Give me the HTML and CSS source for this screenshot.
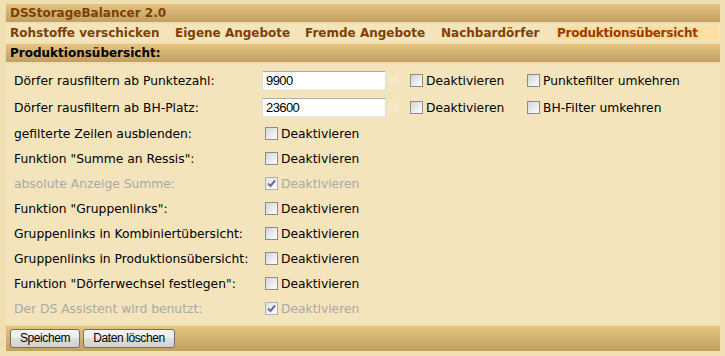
FILE: index.html
```html
<!DOCTYPE html>
<html lang="de">
<head>
    <meta charset="UTF-8">
    <title>DSStorageBalancer 2.0</title>
    <link rel="stylesheet" href="styles.css">
</head>
<body>

    <div class="panel">
        <div class="bar title">DSStorageBalancer 2.0</div>

        <div class="nav">
            <span class="nav-item first">Rohstoffe verschicken</span>
            <span class="nav-item w130">Eigene Angebote</span>
            <span class="nav-item w136">Fremde Angebote</span>
            <span class="nav-item w116">Nachbardörfer</span>
            <span class="nav-item active">Produktionsübersicht</span>
        </div>

        <div class="bar heading">Produktionsübersicht:</div>

        <div class="content">
            <div class="row tall">
                <span class="label">Dörfer rausfiltern ab Punktezahl:</span>
                <input class="num" type="text" value="9900">
                <span class="pct">%</span>
                <label class="check wide"><span class="cb"></span>Deaktivieren</label>
                <label class="check"><span class="cb"></span>Punktefilter umkehren</label>
            </div>
            <div class="row tall">
                <span class="label">Dörfer rausfiltern ab BH-Platz:</span>
                <input class="num" type="text" value="23600">
                <span class="pct">%</span>
                <label class="check wide"><span class="cb"></span>Deaktivieren</label>
                <label class="check"><span class="cb"></span>BH-Filter umkehren</label>
            </div>
            <div class="row">
                <span class="label">gefilterte Zeilen ausblenden:</span>
                <label class="check"><span class="cb"></span>Deaktivieren</label>
            </div>
            <div class="row">
                <span class="label">Funktion "Summe an Ressis":</span>
                <label class="check"><span class="cb"></span>Deaktivieren</label>
            </div>
            <div class="row disabled">
                <span class="label">absolute Anzeige Summe:</span>
                <label class="check"><span class="cb checked"><svg width="11" height="11" viewBox="0 0 11 11"><polyline points="2,5.5 4.5,8 9,2.5" fill="none" stroke="#6a6aa8" stroke-width="2"/></svg></span>Deaktivieren</label>
            </div>
            <div class="row">
                <span class="label">Funktion "Gruppenlinks":</span>
                <label class="check"><span class="cb"></span>Deaktivieren</label>
            </div>
            <div class="row">
                <span class="label">Gruppenlinks in Kombiniertübersicht:</span>
                <label class="check"><span class="cb"></span>Deaktivieren</label>
            </div>
            <div class="row">
                <span class="label">Gruppenlinks in Produktionsübersicht:</span>
                <label class="check"><span class="cb"></span>Deaktivieren</label>
            </div>
            <div class="row">
                <span class="label">Funktion "Dörferwechsel festlegen":</span>
                <label class="check"><span class="cb"></span>Deaktivieren</label>
            </div>
            <div class="row disabled">
                <span class="label">Der DS Assistent wird benutzt:</span>
                <label class="check"><span class="cb checked"><svg width="11" height="11" viewBox="0 0 11 11"><polyline points="2,5.5 4.5,8 9,2.5" fill="none" stroke="#6a6aa8" stroke-width="2"/></svg></span>Deaktivieren</label>
            </div>
        </div>

        <div class="bar footer">
            <button class="btn save">Speichem</button>
            <button class="btn clear">Daten löschen</button>
        </div>
    </div>

</body>
</html>
```

FILE: styles.css
```css
body {
    margin: 0;
    background: #f0dfb3;
    font-family: "DejaVu Sans", Verdana, sans-serif;
    font-size: 12px;
    color: #000;
}
.panel {
    width: 714px;
    margin: 4px 0 0 6px;
    display: flex;
    flex-direction: column;
    gap: 2px;
}
.bar {
    height: 18px;
    line-height: 18px;
    padding-left: 4px;
    font-weight: bold;
    background: linear-gradient(#e5c480, #d2b06f 50%, #c2a062);
}
.title {
    color: #7c3f02;
}
.nav {
    height: 18px;
    box-sizing: border-box;
    padding: 2px 2px 2px 0;
    display: flex;
    background: #f4e4bc;
    font-weight: bold;
    color: #804000;
    line-height: 14px;
}
.nav-item {
    padding-left: 1px;
    white-space: nowrap;
}
.nav-item.first {
    width: 164px;
    padding-left: 4px;
}
.w130 { width: 129px; }
.w136 { width: 135px; }
.w116 { width: 115px; }
.nav-item.active {
    flex: 1;
    background: #ffdf9f;
    color: #9c3800;
    letter-spacing: -0.25px;
}
.content {
    background: #f4e4bc;
    padding: 3px 0 3px 8px;
    height: 260px;
    box-sizing: border-box;
    font-size: 12.3px;
}
.row {
    height: 25px;
    display: flex;
    align-items: center;
}
.row.tall {
    height: 27px;
}
.label {
    width: 247px;
    white-space: nowrap;
}
.disabled {
    color: #a9a9a9;
}
.num {
    width: 124px;
    height: 19px;
    box-sizing: border-box;
    margin: 0 0 0 1px;
    padding: 0 3px;
    border: 1px solid #dbdfe6;
    border-top-color: #abadb3;
    border-bottom-color: #e3e9ef;
    background: #fff;
    font-family: "Liberation Sans", Arial, sans-serif;
    font-size: 13px;
    letter-spacing: -0.6px;
    color: #000;
    outline: none;
}
.pct {
    width: 18px;
    padding-left: 2px;
    color: #faf0d8;
    font-family: "Liberation Sans", Arial, sans-serif;
    font-size: 13px;
}
.check {
    display: flex;
    align-items: center;
    white-space: nowrap;
}
.check.wide {
    width: 117px;
}
.cb {
    width: 13px;
    height: 13px;
    box-sizing: border-box;
    margin: 0 3px 0 4px;
    border: 1px solid #8c8c8c;
    background: linear-gradient(135deg, #d4d4d4, #f2f2f2 70%, #fdfdfd);
    display: flex;
    align-items: center;
    justify-content: center;
}
.cb.checked {
    border-color: #b0b0b0;
    background: linear-gradient(135deg, #e0e0e0, #f6f6f6 70%, #fdfdfd);
}
.footer {
    height: 25px;
    padding: 3px 0 0 4px;
    box-sizing: border-box;
    display: flex;
    gap: 3px;
}
.btn {
    height: 19px;
    padding: 0;
    border: 1px solid #707070;
    border-radius: 3px;
    background: linear-gradient(#f4f4f4, #ebebeb 50%, #dedede 50%, #d0d0d0);
    font-family: "Liberation Sans", Arial, sans-serif;
    font-size: 12px;
    letter-spacing: -0.4px;
    color: #000;
    font-weight: normal;
    line-height: 17px;
}
.btn.save { width: 70px; }
.btn.clear { width: 92px; }
```
